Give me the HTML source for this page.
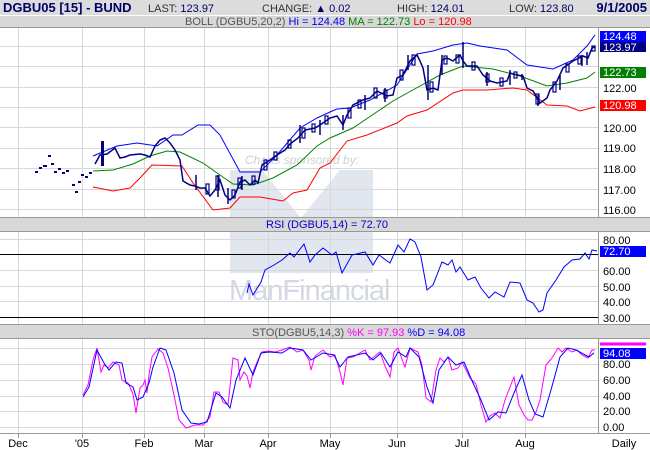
<!DOCTYPE html>
<html><head><meta charset="utf-8"><style>
body{margin:0;background:#fff;}
svg{display:block;font-family:"Liberation Sans",Arial,sans-serif;}
</style></head><body>
<svg width="650" height="450" viewBox="0 0 650 450" xmlns="http://www.w3.org/2000/svg">
<rect width="650" height="450" fill="#fff"/>
<rect x="0" y="0" width="650" height="15" fill="#dcdcdc"/>
<line x1="0" y1="15.5" x2="650" y2="15.5" stroke="#fff"/>
<rect x="0" y="16" width="650" height="12" fill="#d8d8d8"/>
<line x1="0" y1="27.5" x2="650" y2="27.5" stroke="#999"/>
<text x="3" y="12" font-size="13" font-weight="bold" fill="#000066">DGBU05 [15] - BUND</text>
<text x="148" y="12" font-size="11" fill="#333">LAST: <tspan fill="#000066">123.97</tspan></text>
<text x="262" y="12" font-size="11" fill="#333">CHANGE: <tspan fill="#000066">▲ 0.02</tspan></text>
<text x="397" y="12" font-size="11" fill="#333">HIGH: <tspan fill="#000066">124.01</tspan></text>
<text x="509" y="12" font-size="11" fill="#333">LOW: <tspan fill="#000066">123.80</tspan></text>
<text x="647" y="12" font-size="13" font-weight="bold" fill="#000066" text-anchor="end">9/1/2005</text>
<text x="185" y="25" font-size="11" fill="#555">BOLL (DGBU5,20,2) <tspan fill="#0000ff">Hi = 124.48</tspan> <tspan fill="#008000">MA = 122.73</tspan> <tspan fill="#ff0000">Lo = 120.98</tspan></text>

<path d="M230 170 H373 V273 H230 Z M262 170 L301 218 L340 170 Z" fill="#e2e6ef" fill-rule="evenodd"/>
<text x="245" y="164" font-size="12" font-style="italic" fill="#cfcfcf">Charts sponsored by:</text>
<text x="229" y="300" font-size="29" fill="#d3d8e5" letter-spacing="-1">ManFinancial</text>

<g stroke="#d8d8d8" stroke-width="1">
<path d="M0 46.5H598M0 66.5H598M0 87.5H598M0 107.5H598M0 127.5H598M0 148.5H598M0 168.5H598M0 189.5H598M0 209.5H598"/>
<path d="M18.5 28V217M82.5 28V217M144.5 28V217M204.5 28V217M268.5 28V217M330.5 28V217M397.5 28V217M462.5 28V217M525.5 28V217"/>
<path d="M0 239.5H598M0 270.5H598M0 286.5H598M0 301.5H598"/>
<path d="M18.5 231V324M82.5 231V324M144.5 231V324M204.5 231V324M268.5 231V324M330.5 231V324M397.5 231V324M462.5 231V324M525.5 231V324"/>
<path d="M0 348.5H598M0 364.5H598M0 380.5H598M0 396.5H598M0 411.5H598M0 427.5H598"/>
<path d="M18.5 338V433M82.5 338V433M144.5 338V433M204.5 338V433M268.5 338V433M330.5 338V433M397.5 338V433M462.5 338V433M525.5 338V433"/>
</g>
<line x1="598.5" y1="28" x2="598.5" y2="433" stroke="#999"/>

<polyline fill="none" stroke="#0000ff" points="93,156 117,146 137,143 157,146 173,135 182,135 198,125 210,125 220,135 240,172 260,172 277,155 300,128 317,118 330,112 337,109 350,108 370,100 397,85 417,54 433,51 453,45 467,43 480,46 507,50 527,65 553,69 573,60 587,46 595,35"/>
<polyline fill="none" stroke="#008000" points="93,171 113,170 133,164 150,156 167,151 180,152 203,163 220,175 233,184 253,185 273,178 297,165 317,146 330,138 353,128 393,101 420,86 440,75 463,66 493,69 520,76 547,86 567,83 587,78 595,72"/>
<polyline fill="none" stroke="#ff0000" points="93,187 113,191 130,188 140,178 152,165 182,166 193,183 213,210 230,208 240,197 260,197 283,201 293,193 307,190 320,168 330,163 347,141 367,135 397,123 407,116 427,110 453,93 463,90 487,90 513,88 527,90 547,105 567,106 580,111 595,107"/>

<g fill="#000080">
<rect x="35" y="171" width="3" height="2"/><rect x="39" y="167" width="3" height="2"/><rect x="43" y="165" width="4" height="2"/><rect x="48" y="155" width="3" height="2"/><rect x="51" y="163" width="3" height="2"/><rect x="54" y="171" width="3" height="2"/><rect x="58" y="168" width="3" height="2"/><rect x="62" y="172" width="3" height="2"/><rect x="66" y="170" width="3" height="2"/><rect x="72" y="184" width="3" height="2"/><rect x="75" y="191" width="3" height="2"/><rect x="78" y="181" width="3" height="2"/><rect x="81" y="174" width="3" height="2"/><rect x="85" y="176" width="3" height="2"/><rect x="89" y="172" width="3" height="2"/>
<rect x="101" y="141" width="3" height="25"/>
</g>
<polyline fill="none" stroke="#000080" stroke-width="1.5" points="95,164 100,155 107,154 115,148 120,158 125,157 130,155 140,154 145,155 150,157 155,146 160,140 165,138 170,143 175,150 180,160 183,181 190,185 195,186 200,188 205,188 210,196 215,190 220,180 225,195 230,200 235,195 240,182 245,180 250,185 255,180 258,183 262,165 270,160 277,155 285,150 290,144 298,138 305,130 315,128 320,125 330,118 337,116 343,125 347,115 353,105 363,100 370,98 377,91 387,96 393,95 397,78 403,75 410,61 417,55 420,61 423,68 427,90 433,88 438,90 442,60 447,58 453,61 460,55 463,61 467,66 477,66 483,75 490,81 497,83 507,81 510,73 517,75 523,76 527,88 533,91 540,103 547,98 550,90 557,81 563,68 573,61 583,56 588,58 592,48 595,47"/>
<g fill="none" stroke="#000080" stroke-width="1.2">
<rect x="206" y="184" width="3" height="10"/><rect x="216" y="176" width="3" height="14"/><rect x="232" y="190" width="3" height="8"/><rect x="238" y="178" width="3" height="10"/><rect x="252" y="176" width="3" height="8"/><rect x="264" y="160" width="3" height="10"/><rect x="274" y="152" width="3" height="8"/><rect x="288" y="140" width="3" height="8"/><rect x="302" y="128" width="3" height="10"/><rect x="312" y="124" width="3" height="8"/><rect x="325" y="116" width="3" height="8"/><rect x="348" y="108" width="3" height="10"/><rect x="358" y="100" width="3" height="8"/><rect x="374" y="88" width="3" height="10"/><rect x="384" y="90" width="3" height="8"/><rect x="400" y="70" width="3" height="10"/><rect x="412" y="55" width="3" height="10"/><rect x="430" y="82" width="3" height="10"/><rect x="444" y="56" width="3" height="8"/><rect x="456" y="55" width="3" height="8"/><rect x="472" y="62" width="3" height="8"/><rect x="486" y="74" width="3" height="8"/><rect x="500" y="78" width="3" height="8"/><rect x="514" y="72" width="3" height="6"/><rect x="536" y="94" width="3" height="10"/><rect x="553" y="82" width="3" height="10"/><rect x="566" y="64" width="3" height="8"/><rect x="578" y="56" width="3" height="8"/><rect x="592" y="46" width="3" height="5"/>
</g>
<g stroke="#000080" stroke-width="1.5">
<path d="M196 175V190M218 175V197M228 188V204M242 176V190M300 125V143M320 120V135M343 115V130M365 95V110M385 88V102M408 55V70M428 65V100M442 55V75M463 42V68M487 72V86M510 70V85M522 74V80M538 95V106M560 75V90M582 55V66M587 52V65"/>
</g>

<rect x="600" y="31" width="46" height="11" fill="#0000ff"/>
<text x="603" y="40" font-size="11" fill="#fff">124.48</text>
<rect x="600" y="42" width="46" height="10" fill="#000080"/>
<text x="603" y="51" font-size="11" fill="#fff">123.97</text>
<rect x="600" y="67" width="46" height="11" fill="#008000"/>
<text x="603" y="76" font-size="11" fill="#fff">122.73</text>
<rect x="600" y="100" width="46" height="11" fill="#ff0000"/>
<text x="603" y="109" font-size="11" fill="#fff">120.98</text>
<g font-size="11" fill="#000">
<text x="603" y="92">122.00</text><text x="603" y="132">120.00</text><text x="603" y="152">119.00</text><text x="603" y="173">118.00</text><text x="603" y="194">117.00</text><text x="603" y="214">116.00</text>
</g>

<rect x="0" y="218" width="650" height="13" fill="#d8d8d8"/>
<line x1="0" y1="217.5" x2="650" y2="217.5" stroke="#999"/>
<line x1="0" y1="231.5" x2="650" y2="231.5" stroke="#999"/>
<text x="266" y="228" font-size="11" fill="#0000cc">RSI (DGBU5,14) = 72.70</text>
<line x1="0" y1="254.5" x2="598" y2="254.5" stroke="#000"/>
<line x1="0" y1="317.5" x2="598" y2="317.5" stroke="#000"/>
<polyline fill="none" stroke="#0000ff" points="247,293 249,284 253,295 261,282 265,270 274,265 282,260 290,253 294,257 304,244 310,262 315,255 323,248 332,255 336,252 342,273 352,255 365,252 373,265 379,255 390,263 398,245 404,252 410,239 415,242 421,257 427,290 433,285 442,262 448,265 452,260 456,272 460,267 468,280 475,277 481,288 489,298 495,292 504,297 510,282 520,283 527,300 533,303 539,312 543,310 547,293 556,280 564,267 572,260 580,259 585,253 589,259 592,250 597,251"/>
<g font-size="11" fill="#000"><text x="603" y="244">80.00</text><text x="603" y="275">60.00</text><text x="603" y="291">50.00</text><text x="603" y="306">40.00</text><text x="603" y="322">30.00</text></g>
<rect x="600" y="246" width="46" height="11" fill="#0000ff"/>
<text x="603" y="255" font-size="11" fill="#fff">72.70</text>

<rect x="0" y="325" width="650" height="13" fill="#d8d8d8"/>
<line x1="0" y1="324.5" x2="650" y2="324.5" stroke="#999"/>
<line x1="0" y1="338.5" x2="650" y2="338.5" stroke="#999"/>
<text x="252" y="336" font-size="11" fill="#555">STO(DGBU5,14,3) <tspan fill="#ff00ff">%K = 97.93</tspan> <tspan fill="#0000ff">%D = 94.08</tspan></text>
<polyline fill="none" stroke="#ff00ff" points="83,395 88,385 93,360 97,348 101,372 104,365 108,368 113,362 119,365 122,380 128,383 133,394 136,413 140,388 143,385 145,380 147,393 149,375 152,357 158,349 163,353 168,368 174,395 179,420 186,428 195,425 203,425 210,417 214,392 219,392 223,402 228,405 233,358 238,360 240,380 244,372 247,376 250,388 253,372 258,360 262,352 268,351 275,352 282,350 290,347 297,352 303,350 309,360 311,370 315,356 323,350 330,357 335,355 340,372 343,385 347,358 353,357 365,350 370,360 375,356 380,352 385,366 390,377 394,352 398,348 403,362 405,367 410,348 418,352 422,365 426,398 431,402 436,370 440,358 444,362 448,357 452,370 458,368 462,362 470,378 476,384 481,405 486,422 490,416 495,413 500,418 505,400 510,387 514,377 519,405 524,415 528,420 532,420 536,412 540,400 546,365 552,358 558,348 562,352 566,348 572,352 577,350 582,355 588,358 592,350 595,350"/>
<polyline fill="none" stroke="#0000ff" points="83,397 89,387 97,350 104,363 109,370 116,362 122,363 126,383 133,387 137,400 143,397 149,383 153,367 160,348 166,350 174,373 182,410 191,423 199,424 207,422 216,393 222,397 230,408 236,380 245,358 253,375 261,353 269,352 282,353 290,348 303,350 311,360 323,353 334,355 340,367 348,357 365,353 373,360 381,353 390,367 398,352 406,357 410,348 419,357 427,387 433,403 439,370 448,357 456,365 464,362 473,383 481,400 489,420 498,412 506,413 514,393 522,375 529,400 535,414 543,417 551,390 560,357 568,348 576,350 589,357 594,353"/>
<line x1="600" y1="344" x2="646" y2="344" stroke="#ff00ff" stroke-width="3"/>
<rect x="600" y="348" width="46" height="11" fill="#0000ff"/>
<text x="603" y="357" font-size="11" fill="#fff">94.08</text>
<g font-size="11" fill="#000"><text x="603" y="368">80.00</text><text x="603" y="384">60.00</text><text x="603" y="400">40.00</text><text x="603" y="415">20.00</text><text x="603" y="431">0.00</text></g>

<line x1="0" y1="433.5" x2="650" y2="433.5" stroke="#999"/>
<g stroke="#999"><path d="M18.5 433V438M82.5 433V438M144.5 433V438M204.5 433V438M268.5 433V438M330.5 433V438M397.5 433V438M462.5 433V438M525.5 433V438"/></g>
<g font-size="11" fill="#000" text-anchor="middle">
<text x="18" y="447">Dec</text><text x="82" y="447">'05</text><text x="144" y="447">Feb</text><text x="204" y="447">Mar</text><text x="268" y="447">Apr</text><text x="330" y="447">May</text><text x="397" y="447">Jun</text><text x="462" y="447">Jul</text><text x="525" y="447">Aug</text><text x="624" y="447">Daily</text>
</g>
</svg>
</body></html>
